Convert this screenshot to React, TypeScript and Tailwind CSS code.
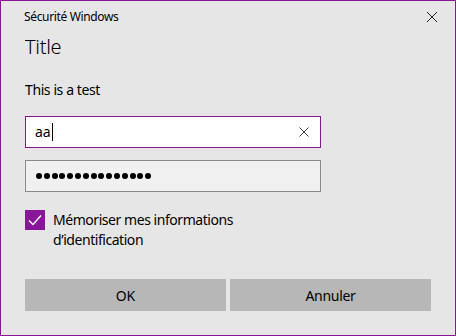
import React from "react";

export default function App() {
  const dots = Array.from({ length: 15 });
  return (
    <div
      className="w-[456px] h-[336px] border border-[#881798] bg-[#e6e6e6] flex flex-col text-black"
      style={{ fontFamily: '"Noto Sans", "Open Sans", sans-serif' }}
    >
      <div className="h-[32px] flex items-center justify-between pl-[23px] pr-[17px]">
        <span className="text-[12px] leading-[16px] tracking-[-0.35px]">Sécurité Windows</span>
        <svg width="12" height="12" viewBox="0 0 12 12" className="text-[#222]">
          <path d="M1 1L11 11M11 1L1 11" stroke="currentColor" strokeWidth="1" fill="none" />
        </svg>
      </div>
      <div className="flex flex-col px-[24px]">
        <div className="text-[20px] leading-[28px] font-light tracking-[-0.3px]">Title</div>
        <div className="mt-[19px] text-[14px] leading-[20px] tracking-[-0.4px]">This is a test</div>
        <div className="mt-[16px] w-[296px] h-[32px] border border-[#881798] bg-white flex items-center pl-[9px] pr-[11px]">
          <span className="text-[14px] leading-[20px]">aa</span>
          <span className="w-px h-[18px] bg-black ml-[1px]" />
          <div className="flex-1" />
          <svg width="10" height="10" viewBox="0 0 10 10">
            <path d="M0.5 0.5L9.5 9.5M9.5 0.5L0.5 9.5" stroke="#444" strokeWidth="1" fill="none" />
          </svg>
        </div>
        <div className="mt-[12px] w-[296px] h-[32px] border border-[#8a8a8a] bg-[#f0f0f0] flex items-center pl-[10px] gap-[1.8px]">
          {dots.map((_, i) => (
            <span key={i} className="w-[6px] h-[6px] rounded-full bg-black" />
          ))}
        </div>
        <div className="mt-[18px] flex items-start gap-[8px]">
          <div className="w-[20px] h-[20px] bg-[#881798] flex items-center justify-center shrink-0">
            <svg width="14" height="12" viewBox="0 0 14 12">
              <path d="M1 6.5L5 10.5L13 1.5" stroke="white" strokeWidth="1.4" fill="none" />
            </svg>
          </div>
          <div className="text-[14px] leading-[20px] tracking-[-0.45px]">
            Mémoriser mes informations
            <br />
            d’identification
          </div>
        </div>
        <div className="mt-[29px] flex gap-[4px]">
          <div className="w-[201px] h-[32px] bg-[#b7b7b7] flex items-center justify-center text-[14px]">OK</div>
          <div className="w-[201px] h-[32px] bg-[#b7b7b7] flex items-center justify-center text-[14px] tracking-[-0.3px]">Annuler</div>
        </div>
      </div>
    </div>
  );
}
